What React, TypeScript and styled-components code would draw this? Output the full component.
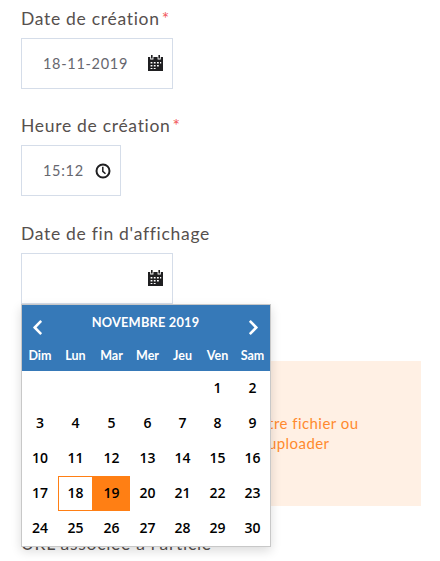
import React from "react"
import styled, { createGlobalStyle } from "styled-components"
import { FaChevronLeft as Left, FaChevronRight as Right } from "react-icons/fa"

const GlobalStyle = createGlobalStyle`
  html, body {
    margin: 0;
    padding: 0;
    background: #fff;
    overflow: hidden;
  }
  body {
    font-family: "Lato", "Open Sans", sans-serif;
  }
`

const dayNames = ["Dim", "Lun", "Mar", "Mer", "Jeu", "Ven", "Sam"]
const weeks: (number | null)[][] = [
  [null, null, null, null, null, 1, 2],
  [3, 4, 5, 6, 7, 8, 9],
  [10, 11, 12, 13, 14, 15, 16],
  [17, 18, 19, 20, 21, 22, 23],
  [24, 25, 26, 27, 28, 29, 30],
]

const CalendarIcon = () => (
  <svg width="15" height="16" viewBox="0 0 15 16" aria-hidden="true">
    <path
      fill="#1f1f21"
      fillRule="evenodd"
      d="M3 0h1.6v3.6H3zM10.4 0H12v3.6h-1.6zM0 2h2.2v2.4h3.2V2h4.2v2.4h3.2V2H15v14H0zM2.6 7v1.5h1.8V7zm3.2 0v1.5h1.8V7zM9 7v1.5h1.8V7zm3 0v1.5h1.2V7zM2.6 10v1.5h1.8V10zm3.2 0v1.5h1.8V10zM9 10v1.5h1.8V10zM2.6 13v1h1.8v-1zm3.2 0v1h1.8v-1z"
    />
  </svg>
)

const ClockIcon = () => (
  <svg width="16" height="16" viewBox="0 0 16 16" aria-hidden="true">
    <circle cx="8" cy="8" r="6.5" fill="none" stroke="#1f1f21" strokeWidth="2" />
    <path d="M7.8 3.8v4.5l2.7 2.5" fill="none" stroke="#1f1f21" strokeWidth="1.5" />
  </svg>
)

const App = () => (
  <Page>
    <GlobalStyle />
    <Field>
      <Label>
        Date de création<Star>*</Star>
      </Label>
      <InputBox>
        <InputValue>18-11-2019</InputValue>
        <CalendarIcon />
      </InputBox>
    </Field>
    <Field>
      <Label>
        Heure de création<Star>*</Star>
      </Label>
      <InputBox $narrow>
        <InputValue>15:12</InputValue>
        <ClockIcon />
      </InputBox>
    </Field>
    <Field>
      <Label>Date de fin d'affichage</Label>
      <PickerAnchor>
        <InputBox>
          <InputValue />
          <CalendarIcon />
        </InputBox>
        <Popup>
          <PopupHeader>
            <MonthRow>
              <Left />
              <MonthName>NOVEMBRE 2019</MonthName>
              <Right />
            </MonthRow>
            <DayNames>
              {dayNames.map(name => (
                <DayName key={name}>{name}</DayName>
              ))}
            </DayNames>
          </PopupHeader>
          <Days>
            {weeks.flat().map((day, i) => (
              <Day key={`day-${i}`} $today={day === 18} $selected={day === 19}>
                {day}
              </Day>
            ))}
          </Days>
        </Popup>
      </PickerAnchor>
    </Field>
    <DropZone>
      <DropText>
        Glissez-déposez votre fichier ou
        <br />
        cliquez ici afin de l'uploader
      </DropText>
    </DropZone>
    <NextLabel>URL associée à l'article</NextLabel>
  </Page>
)

export default App

const columns = "36px 35px 37px 35px 35px 35px 35px"

const Page = styled.div`
  width: 440px;
  height: 561px;
  padding: 8.8px 19px 0 21px;
  box-sizing: border-box;
  overflow: hidden;
`

const Field = styled.div`
  margin-bottom: 27.5px;
`

const Label = styled.div`
  height: 20px;
  margin-bottom: 9px;
  font-size: 17.5px;
  line-height: 20px;
  letter-spacing: 0.7px;
  color: #56504e;
`

const Star = styled.span`
  margin-left: 2px;
  color: #f2585b;
`

const InputBox = styled.div<{ $narrow?: boolean }>`
  box-sizing: border-box;
  display: flex;
  align-items: center;
  justify-content: space-between;
  width: ${p => (p.$narrow ? "100px" : "152px")};
  height: 51px;
  padding: 0 9px 0 21px;
  border: 1px solid #d5dde9;
`

const InputValue = styled.span`
  font-size: 14.5px;
  letter-spacing: 0.7px;
  color: #66676f;
`

const PickerAnchor = styled.div`
  position: relative;
`

const Popup = styled.div`
  position: absolute;
  z-index: 2;
  top: 51px;
  left: 0;
  box-sizing: border-box;
  width: 250px;
  height: 243px;
  border: 1px solid #c8c8c8;
  background: #fff;
  box-shadow: 0 4px 10px rgba(0, 0, 0, 0.14);
`

const PopupHeader = styled.div`
  height: 66px;
  background: #3679b8;
  color: #fff;
`

const MonthRow = styled.div`
  display: flex;
  align-items: center;
  justify-content: space-between;
  height: 46px;
  padding: 0 8px 0 7px;
  margin-bottom: -5px;
  font-size: 17px;
`

const MonthName = styled.span`
  margin-top: -11px;
  font-size: 12.8px;
  font-weight: 700;
  letter-spacing: 0.2px;
`

const DayNames = styled.div`
  display: grid;
  grid-template-columns: ${columns};
`

const DayName = styled.span`
  font-size: 12.5px;
  font-weight: 700;
  line-height: 20px;
  text-align: center;
`

const Days = styled.div`
  display: grid;
  grid-template-columns: ${columns};
  grid-auto-rows: 35px;
`

const Day = styled.span<{ $today?: boolean; $selected?: boolean }>`
  box-sizing: border-box;
  display: flex;
  align-items: center;
  justify-content: center;
  padding-bottom: 2px;
  border: 1px solid ${p => (p.$today ? "#ff7f14" : "transparent")};
  background: ${p => (p.$selected ? "#ff7f14" : "transparent")};
  font-family: "Open Sans", sans-serif;
  font-size: 14px;
  font-weight: 550;
  color: #000;
`

const DropZone = styled.div`
  display: flex;
  align-items: center;
  height: 145px;
  margin-top: 57.2px;
  padding-left: 114px;
  background: #fff0e4;
`

const DropText = styled.p`
  margin: 0;
  font-size: 15px;
  line-height: 20px;
  letter-spacing: 0.45px;
  color: #ff8a2e;
  white-space: nowrap;
`

const NextLabel = styled.div`
  margin-top: 28px;
  font-size: 17.5px;
  line-height: 20px;
  letter-spacing: 0.7px;
  color: #56504e;
`
